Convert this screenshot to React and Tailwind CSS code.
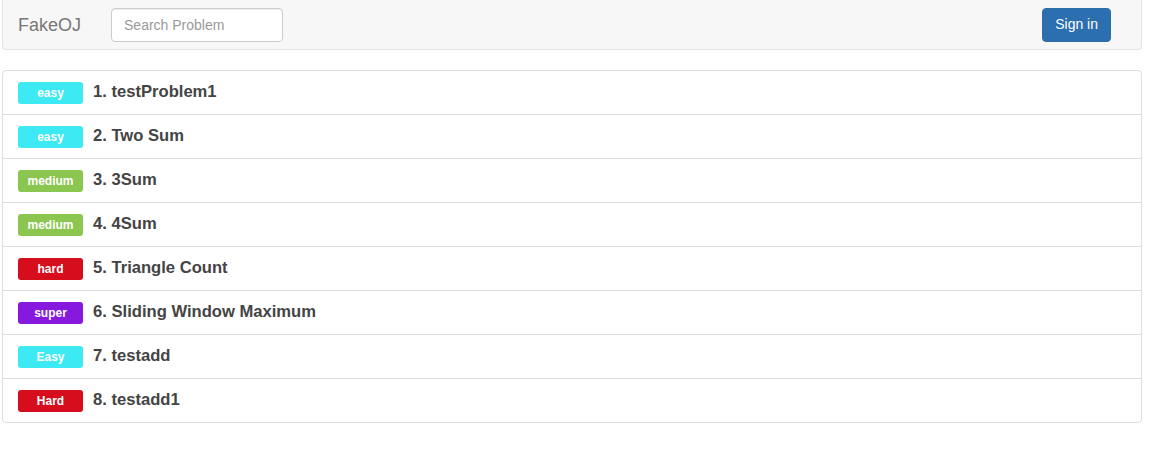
import React from 'react'

const problems = [
  { id: 1, title: 'testProblem1', level: 'easy' },
  { id: 2, title: 'Two Sum', level: 'easy' },
  { id: 3, title: '3Sum', level: 'medium' },
  { id: 4, title: '4Sum', level: 'medium' },
  { id: 5, title: 'Triangle Count', level: 'hard' },
  { id: 6, title: 'Sliding Window Maximum', level: 'super' },
  { id: 7, title: 'testadd', level: 'Easy' },
  { id: 8, title: 'testadd1', level: 'Hard' },
]

const levelColor = {
  easy: 'bg-[#3de9f3]',
  medium: 'bg-[#8bc651]',
  hard: 'bg-[#d60d1d]',
  super: 'bg-[#8719de]',
}

export default function App() {
  return (
    <div className="min-h-[451px] bg-white font-['Liberation_Sans',Arial,sans-serif] text-[#333]">
      {/* Navbar */}
      <div className="ml-[2px] w-[1140px] h-[50px] bg-[#f7f7f7] border-x border-b border-[#e3e3e3] rounded-b-[4px] flex items-center pl-[15px] pr-[30px]">
        <span className="text-[18px] text-[#777] leading-none mr-[30px]">FakeOJ</span>
        <input
          placeholder="Search Problem"
          className="w-[172px] h-[34px] px-[12px] text-[14px] bg-white border border-[#ccc] rounded-[4px] outline-none placeholder:text-[#999] shadow-[inset_0_1px_1px_rgba(0,0,0,0.075)]"
        />
        <div className="flex-1" />
        <button className="h-[34px] px-[12px] text-[14px] font-medium text-white bg-[#2c6fb0] border border-[#2e6da4] rounded-[4px]">
          Sign in
        </button>
      </div>

      {/* Problem list */}
      <div className="ml-[2px] mt-[20px] w-[1140px] border border-[#ddd] rounded-[4px]">
        {problems.map((p, i) => (
          <div
            key={p.id}
            className={`flex items-center px-[15px] ${i < problems.length - 1 ? 'h-[44px] border-b border-[#ddd]' : 'h-[43px]'}`}
          >
            <span
              className={`w-[65px] h-[22px] flex items-center justify-center rounded-[3px] text-white text-[12px] font-bold ${levelColor[p.level.toLowerCase()]}`}
            >
              {p.level}
            </span>
            <span className="ml-[10px] text-[16.6px] font-bold text-[#444]">
              {p.id}. {p.title}
            </span>
          </div>
        ))}
      </div>
    </div>
  )
}
